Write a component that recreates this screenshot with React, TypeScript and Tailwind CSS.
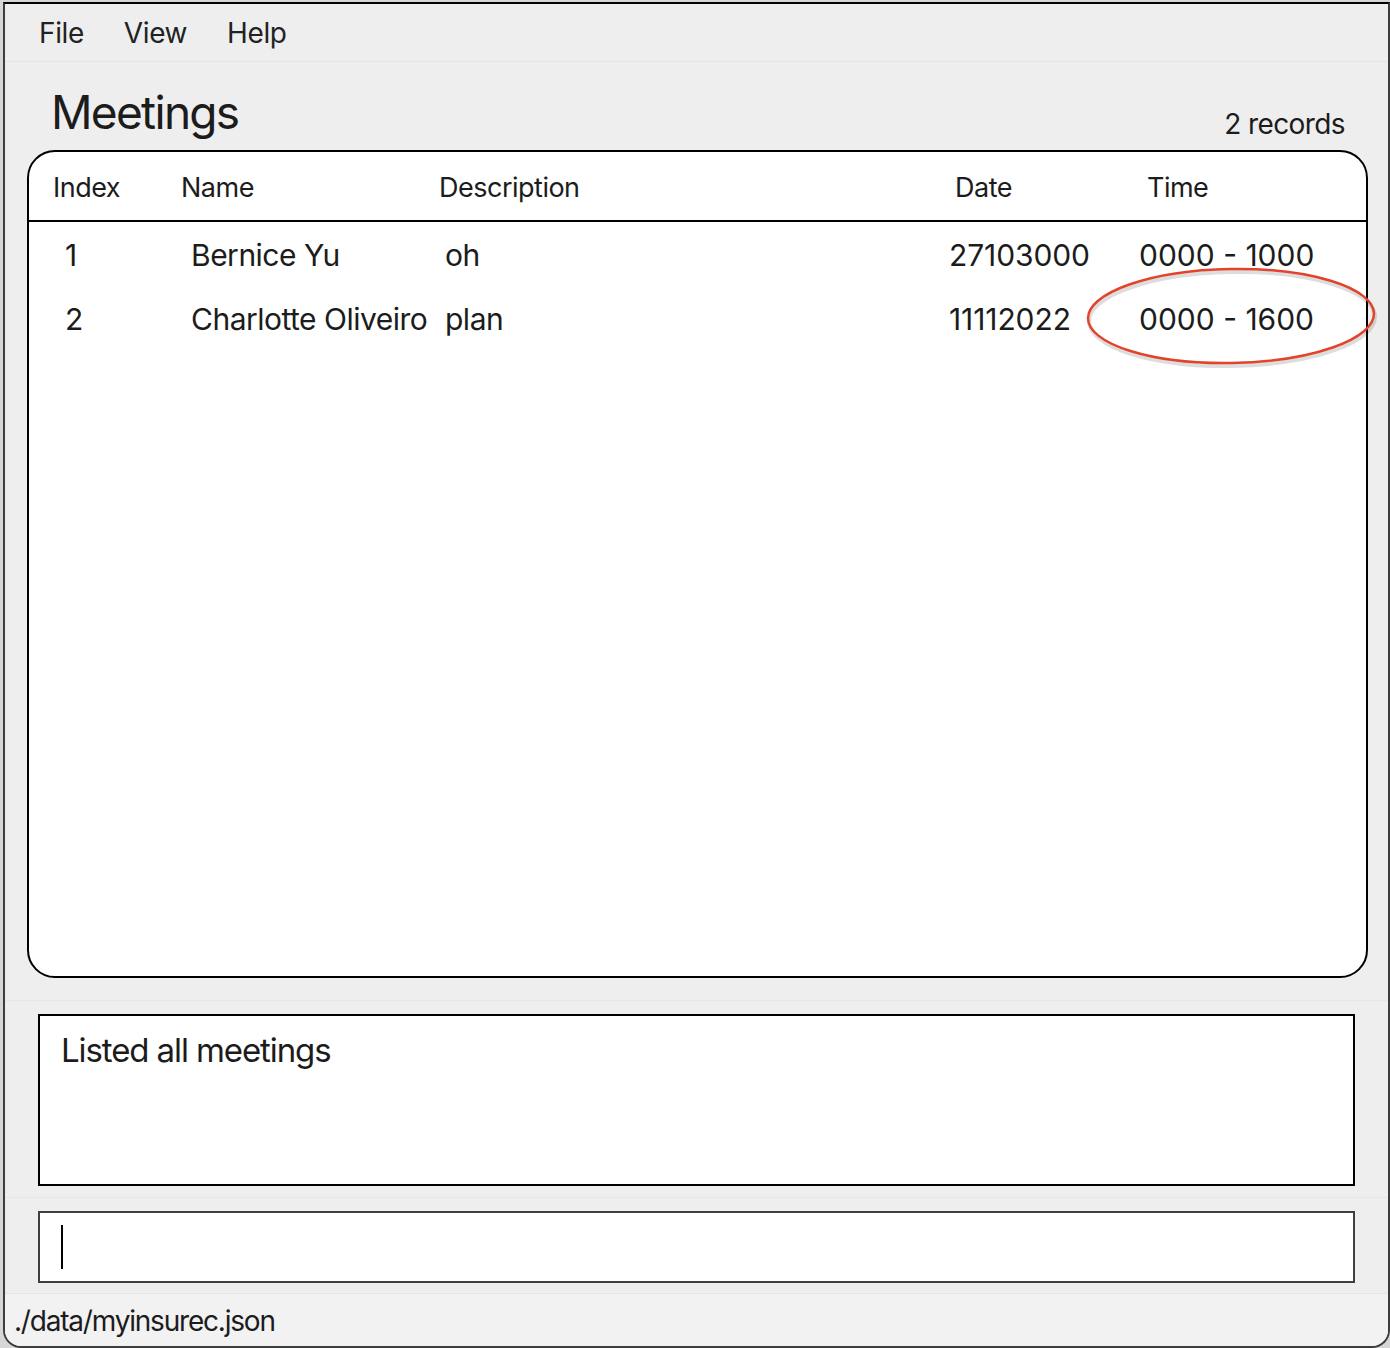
import React from 'react';

const font = { fontFamily: 'Inter, "Noto Sans", "Liberation Sans", sans-serif' };

const meetings = [
  { index: '1', name: 'Bernice Yu', description: 'oh', date: '27103000', time: '0000 - 1000' },
  { index: '2', name: 'Charlotte Oliveiro', description: 'plan', date: '11112022', time: '0000 - 1600' },
];

export default function App() {
  return (
    <div className="relative w-[1390px] h-[1348px] bg-[#d6d6d6] flex pl-[3px] text-[#1c1c1c]" style={font}>
      {/* Main window */}
      <div className="flex-1 flex flex-col mt-[2px] bg-[#eeeeee] border-t-2 border-t-black border-x-2 border-b-2 border-x-[#3d3d3d] border-b-[#3d3d3d] rounded-b-[18px] overflow-hidden">
        {/* Menu bar */}
        <div className="h-[58px] flex items-center gap-[40px] pl-[34px] text-[28px] text-[#222] border-b border-[#e5e5e5] tracking-[-0.4px]">
          <span>File</span>
          <span>View</span>
          <span>Help</span>
        </div>

        {/* Title */}
        <div className="h-[88px] flex items-end justify-between pl-[46px] pr-[43px]">
          <h1 className="text-[46px] leading-none pb-[15px] tracking-[-1.7px]">Meetings</h1>
          <span className="text-[28px] leading-none pb-[12px] tracking-[-0.6px]">2 records</span>
        </div>

        {/* Table */}
        <div className="ml-[22px] mr-[20px] h-[828px] bg-white border-2 border-black rounded-[28px] overflow-hidden">
          <div className="h-[70px] pt-[4px] grid grid-cols-[128px_258px_516px_192px_1fr] items-center pl-[24px] text-[27px] border-b-2 border-black tracking-[-0.5px]">
            <span>Index</span>
            <span>Name</span>
            <span>Description</span>
            <span>Date</span>
            <span>Time</span>
          </div>
          {meetings.map((m) => (
            <div
              key={m.index}
              className="h-[64px] pt-[2px] grid grid-cols-[126px_254px_504px_190px_1fr] items-center pl-[36px] text-[30px] tracking-[-0.5px]"
            >
              <span>{m.index}</span>
              <span className="whitespace-nowrap">{m.name}</span>
              <span>{m.description}</span>
              <span className="tracking-[-0.1px]">{m.date}</span>
              <span className="tracking-[0px]">{m.time}</span>
            </div>
          ))}
        </div>

        {/* Result display */}
        <div className="mt-[22px] border-t border-[#e6e6e6] pt-[13px] pb-[11px] px-[33px]">
          <div className="h-[172px] bg-white border-2 border-black pl-[21px] pt-[10px] text-[33px] tracking-[-1.1px]">
            Listed all meetings
          </div>
        </div>

        {/* Command box */}
        <div className="border-t border-[#e6e6e6] pt-[13px] pb-[10px] px-[33px]">
          <div className="h-[72px] bg-white border-2 border-[#3f3f3f] flex items-center pl-[21px]">
            <div className="w-[2px] h-[44px] bg-black" />
          </div>
        </div>

        {/* Status bar */}
        <div className="flex-1 bg-[#f2f2f2] border-t border-[#e6e6e6] flex items-center pl-[9px] pt-[2px] text-[28px] tracking-[-1.2px]">
          ./data/myinsurec.json
        </div>
      </div>

      {/* Red annotation ellipse */}
      <svg className="absolute left-[1080px] top-[260px] pointer-events-none" width="305" height="115" viewBox="0 0 305 115">
        <ellipse cx="151" cy="57" rx="143" ry="47" fill="none" stroke="#00000022" strokeWidth="4" transform="translate(1 2) rotate(-1 151 57)" />
        <ellipse cx="151" cy="56" rx="143" ry="47" fill="none" stroke="#e2432a" strokeWidth="2.5" transform="rotate(-1 151 56)" />
      </svg>
    </div>
  );
}
